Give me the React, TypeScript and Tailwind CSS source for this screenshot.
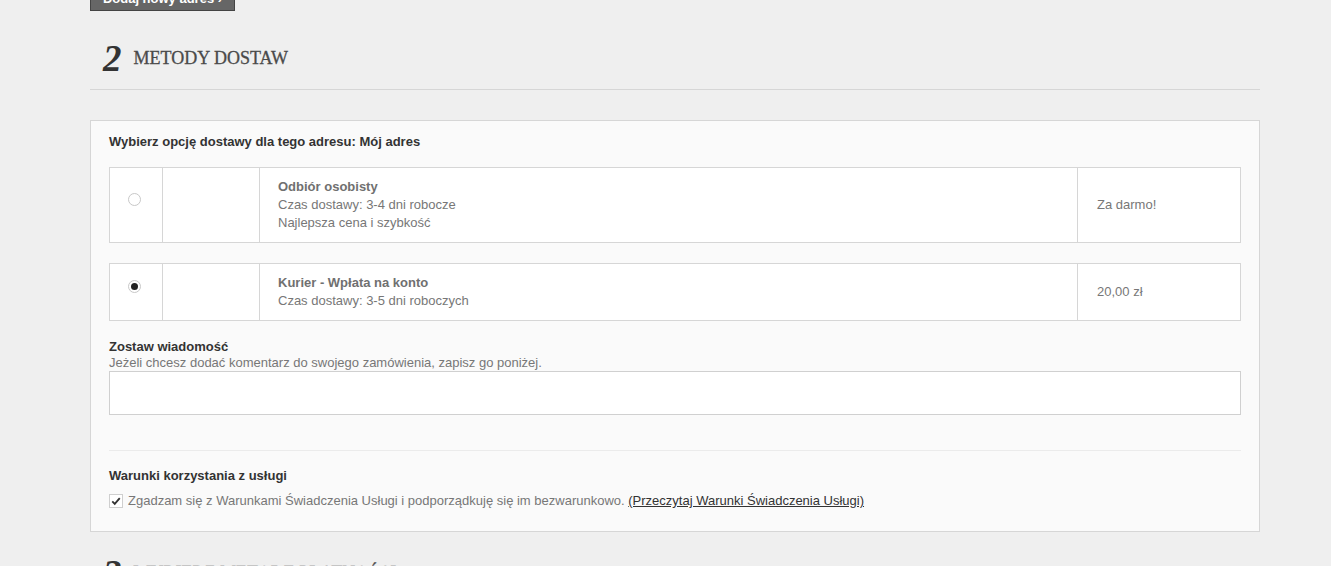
const options = [
  {
    id: "odbior",
    name: "Odbiór osobisty",
    lines: ["Czas dostawy: 3-4 dni robocze", "Najlepsza cena i szybkość"],
    price: "Za darmo!",
    checked: false,
  },
  {
    id: "kurier",
    name: "Kurier - Wpłata na konto",
    lines: ["Czas dostawy: 3-5 dni roboczych"],
    price: "20,00 zł",
    checked: true,
  },
]

function Radio({ checked }: { checked: boolean }) {
  return (
    <span className="mr-[4px] mb-[12px] flex h-[13px] w-[13px] items-center justify-center rounded-full border border-[#c8c8c8] bg-white">
      {checked && <span className="h-[7px] w-[7px] rounded-full bg-[#222]" />}
    </span>
  )
}

function StepHeading({ num, title }: { num: string; title: string }) {
  return (
    <div className="flex items-center gap-[12px] pl-[13px]">
      <span className="font-['Liberation_Serif',serif] text-[37px] leading-[36px] font-bold italic text-[#333]">
        {num}
      </span>
      <span className="mb-[2px] font-['Liberation_Serif',serif] text-[18px] leading-[20px] text-[#4a4a4a] [-webkit-text-stroke:0.3px_#4a4a4a]">
        {title}
      </span>
    </div>
  )
}

export default function App() {
  return (
    <div className="min-h-screen overflow-hidden bg-[#efefef] font-['Liberation_Sans',Arial,sans-serif] text-[13px] text-[#777]">
      <div className="ml-[90px] w-[1170px]">
        <button className="-mt-[20px] flex h-[31px] w-[145px] items-center justify-center border border-[#444] bg-[#666] pt-[7px] text-[13px] font-bold text-white">
          Dodaj nowy adres ›
        </button>

        <div className="border-b border-[#d6d6d6] pt-[30px] pb-[12px]">
          <StepHeading num="2" title="METODY DOSTAW" />
        </div>

        <div className="mt-[30px] border border-[#d6d6d6] bg-[#fafafa] px-[18px] pt-[12px] pb-[21px]">
          <p className="leading-[18px] font-bold text-[#333]">Wybierz opcję dostawy dla tego adresu: Mój adres</p>

          <div className="mt-[16px] flex flex-col gap-[20px]">
            {options.map((o) => (
              <div key={o.id} className="flex divide-x divide-[#d6d6d6] border border-[#d6d6d6] bg-white">
                <div className="flex w-[53px] shrink-0 items-center justify-center">
                  <Radio checked={o.checked} />
                </div>
                <div className="w-[97px] shrink-0" />
                <div className="flex-1 py-[10px] pl-[18px] leading-[18px]">
                  <p className="font-bold text-[#707070]">{o.name}</p>
                  {o.lines.map((l) => (
                    <p key={l}>{l}</p>
                  ))}
                </div>
                <div className="flex w-[162px] shrink-0 items-center pl-[19px]">{o.price}</div>
              </div>
            ))}
          </div>

          <div className="mt-[18px] leading-[16px]">
            <p className="font-bold text-[#333]">Zostaw wiadomość</p>
            <p>Jeżeli chcesz dodać komentarz do swojego zamówienia, zapisz go poniżej.</p>
          </div>
          <textarea className="block h-[44px] w-full resize-none border border-[#d0d0d0] bg-white outline-none" />

          <div className="mt-[35px] border-t border-[#ebebeb]" />

          <p className="mt-[16px] leading-[18px] font-bold text-[#333]">Warunki korzystania z usługi</p>
          <label className="mt-[7px] flex items-center gap-[5px] leading-[18px]">
            <span className="flex h-[14px] w-[14px] items-center justify-center border border-[#cfcfcf] bg-white">
              <svg viewBox="0 0 12 12" className="h-[10px] w-[10px]">
                <path d="M1.5 6.5 L4.5 9.5 L10.5 2.5" fill="none" stroke="#333" strokeWidth="2.2" />
              </svg>
            </span>
            <span>
              Zgadzam się z Warunkami Świadczenia Usługi i podporządkuję się im bezwarunkowo.{" "}
              <a className="text-[#333] underline">(Przeczytaj Warunki Świadczenia Usługi)</a>
            </span>
          </label>
        </div>

        <div className="pt-[24px]">
          <StepHeading num="3" title="WYBIERZ METODĘ PŁATNOŚCI" />
        </div>
      </div>
    </div>
  )
}
